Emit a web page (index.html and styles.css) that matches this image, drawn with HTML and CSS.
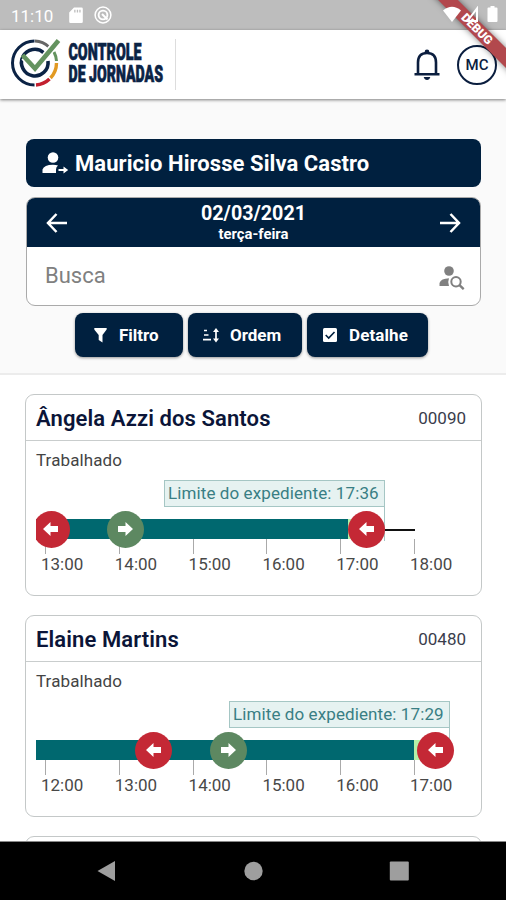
FILE: index.html
```
<!DOCTYPE html>
<html lang="pt-BR">
  <head>
    <meta charset="UTF-8" />
    <meta name="viewport" content="width=device-width, initial-scale=1.0" />
    <title>Controle de Jornadas</title>
    <link rel="stylesheet" href="styles.css">
  </head>
  <body>
    <!-- Status bar -->
    <div class="status-bar">
      <span class="clock">11:10</span>
      <svg class="sd-icon" width="14" height="17" viewBox="0 0 14 17">
        <path fill="#fff" fill-rule="evenodd" d="M5 .5h7.500q1.300 0 1.300 1.300v13q0 1.300-1.300 1.300h-11Q.2 16.100.2 14.800V5.500zM5.200 2.800v2.700h1.300V2.800zM7.800 2.800v2.700h1.300V2.800zM10.300 2.800v2.700h1.300V2.800z" />
      </svg>
      <svg class="sync-icon" width="18" height="18" viewBox="0 0 18 18" fill="none" stroke="#fff">
        <circle cx="9" cy="9" r="7.900" stroke-width="1.500" />
        <circle cx="9" cy="9" r="4.400" stroke-width="1.900" />
        <path d="M8 8l5.500 5.500" stroke-width="2" />
      </svg>
      <svg class="signal-icons" width="56" height="18" viewBox="0 0 56 18" fill="#fff">
        <path d="M1 4.500Q10-3 19 4.500L10 16z" />
        <path fill="none" stroke="#fff" stroke-width="2" d="M35 2.500v12.500H25.500z" />
        <path d="M46.500 1.500h2V0h4v1.500h2q1 0 1 1V15q0 1-1 1h-8q-1 0-1-1V2.500q0-1 1-1z" />
      </svg>
    </div>

    <!-- App bar -->
    <header class="app-bar">
      <svg class="logo" width="155" height="52" viewBox="0 0 155 52">
        <g fill="none">
          <path stroke="#0b2345" stroke-width="3" d="M24.500 4A22 22 0 0 0 24.500 48" />
          <path stroke="#666" stroke-width="3" d="M25 4A22 22 0 0 1 39 10" />
          <path stroke="#64935f" stroke-width="3" d="M44 15A22 22 0 0 1 46.500 24" />
          <path stroke="#e29a22" stroke-width="3.400" d="M46.500 26A22 22 0 0 1 40.500 41" />
          <path stroke="#c3202f" stroke-width="3.600" d="M39.500 42A22 22 0 0 1 26 48" />
          <path stroke="#0b2345" stroke-width="3.600" d="M34 16A13.300 13.300 0 1 0 38 24" />
          <path stroke="#fff" stroke-width="7" d="M14 20L25 31.500 44 8" />
          <path stroke="#64935f" stroke-width="4.600" d="M12.500 18L25 31.500 48.500 3.500" />
        </g>
        <g class="logo-text">
          <text x="58.500" y="23.200" textLength="73" lengthAdjust="spacingAndGlyphs">CONTROLE</text>
          <text x="58.500" y="44.500" textLength="94.500" lengthAdjust="spacingAndGlyphs">DE JORNADAS</text>
        </g>
      </svg>
      <div class="app-bar-divider"></div>
      <svg class="bell" width="26" height="32" viewBox="0 0 26 32">
        <path fill="none" stroke="#0b1e3f" stroke-width="2.600" d="M.5 25.200h25M4 25V13.500Q4 4 13 4t9 9.500V25" />
        <circle cx="13" cy="2.800" r="2.300" fill="#0b1e3f" />
        <path fill="#0b1e3f" d="M9.700 28h6.600q-.8 3-3.300 3t-3.300-3z" />
      </svg>
      <div class="avatar">MC</div>
    </header>
    <div class="debug-ribbon">DEBUG</div>

    <!-- Search panel -->
    <section class="panel">
      <div class="manager">
        <svg width="27" height="22" viewBox="0 0 27 22" fill="#fff">
          <circle cx="11" cy="5.500" r="5.300" />
          <path d="M.5 21v-3.500Q2 13 11 12.800q3 0 5 .8-2 1.500-2 4V21z" />
          <path d="M16.500 17h5v-2.500l4.700 3.500-4.700 3.500v-2.500h-5z" />
        </svg>
        <span>Mauricio Hirosse Silva Castro</span>
      </div>

      <div class="search-box">
        <div class="date-row">
          <svg width="22" height="20" viewBox="0 0 22 20">
            <path d="M21 10H2.500M10.500 1L2 10l8.500 9" />
          </svg>
          <div class="date">
            <strong>02/03/2021</strong>
            <span>terça-feira</span>
          </div>
          <svg width="22" height="20" viewBox="0 0 22 20">
            <path d="M1 10h18.500M11.500 1L20 10l-8.500 9" />
          </svg>
        </div>
        <div class="search-row">
          <span>Busca</span>
          <svg width="26" height="24" viewBox="0 0 26 24">
            <circle cx="10" cy="5" r="4.800" fill="#808080" />
            <path fill="#808080" d="M.5 20v-3Q2 12.500 10 12.200q-1.500 3.500 0 7.800z" />
            <circle cx="17" cy="15.700" r="4.700" fill="none" stroke="#808080" stroke-width="2" />
            <path stroke="#808080" stroke-width="2.400" d="M20 18.700l4.700 4.500" />
          </svg>
        </div>
      </div>

      <div class="actions">
        <button class="action filter">
          <svg width="13" height="15" viewBox="0 0 13 15">
            <path fill="#fff" d="M.3 0h12.400q.3 1.500-.8 2.500L8.500 7v7.500L4.700 12V7L1 2.500Q0 1.500.3 0z" />
          </svg>
          Filtro
        </button>
        <button class="action order">
          <svg width="16" height="15" viewBox="0 0 16 15">
            <path fill="none" stroke="#fff" stroke-width="1.700" d="M1 2.500h3M1 7h4.500M0 11.700h8M13 2v11" />
            <path fill="#fff" d="M13 0l3 4h-6zM13 14.500l-3-4h6z" />
          </svg>
          Ordem
        </button>
        <button class="action detail">
          <svg width="14" height="14" viewBox="0 0 14 14">
            <rect width="14" height="14" rx="1.500" fill="#fff" />
            <path fill="none" stroke="#00203f" stroke-width="1.600" d="M2.700 7l3 3 5.800-6" />
          </svg>
          Detalhe
        </button>
      </div>
    </section>

    <!-- Employees, 73.8px per hour on the timeline -->
    <main class="cards">
      <article class="card">
        <div class="card-head">
          <h2>Ângela Azzi dos Santos</h2>
          <span>00090</span>
        </div>
        <p class="card-label">Trabalhado</p>
        <div class="timeline">
          <div class="axis" style="width: 379px"></div>
          <div class="limit" style="left: 128px">Limite do expediente: 17:36</div>
          <div class="worked" style="width: 312px"></div>
          <div class="extra" style="left: 312px; width: 3px"></div>
          <div class="marker out" style="left: -3.500px">
            <svg width="16" height="14" viewBox="0 0 16 14"><path d="M0 7l7.500-7v4H15v6H7.500v4z" /></svg>
          </div>
          <div class="marker in" style="left: 71px">
            <svg width="16" height="14" viewBox="0 0 16 14"><path d="M15 7L7.500 0v4H0v6h7.500v4z" /></svg>
          </div>
          <div class="marker out" style="left: 312px">
            <svg width="16" height="14" viewBox="0 0 16 14"><path d="M0 7l7.500-7v4H15v6H7.500v4z" /></svg>
          </div>
          <div class="hours">
            <span>13:00</span>
            <span>14:00</span>
            <span>15:00</span>
            <span>16:00</span>
            <span>17:00</span>
            <span>18:00</span>
          </div>
        </div>
      </article>

      <article class="card">
        <div class="card-head">
          <h2>Elaine Martins</h2>
          <span>00480</span>
        </div>
        <p class="card-label">Trabalhado</p>
        <div class="timeline">
          <div class="limit" style="left: 193px">Limite do expediente: 17:29</div>
          <div class="worked" style="width: 378px"></div>
          <div class="extra" style="left: 378px; width: 6px"></div>
          <div class="marker out" style="left: 99px">
            <svg width="16" height="14" viewBox="0 0 16 14"><path d="M0 7l7.500-7v4H15v6H7.500v4z" /></svg>
          </div>
          <div class="marker in" style="left: 174px">
            <svg width="16" height="14" viewBox="0 0 16 14"><path d="M15 7L7.500 0v4H0v6h7.500v4z" /></svg>
          </div>
          <div class="marker out" style="left: 381px">
            <svg width="16" height="14" viewBox="0 0 16 14"><path d="M0 7l7.500-7v4H15v6H7.500v4z" /></svg>
          </div>
          <div class="hours">
            <span>12:00</span>
            <span>13:00</span>
            <span>14:00</span>
            <span>15:00</span>
            <span>16:00</span>
            <span>17:00</span>
          </div>
        </div>
      </article>

      <article class="card"></article>
    </main>

    <!-- Android navigation -->
    <nav class="nav-bar">
      <svg width="20" height="22" viewBox="0 0 20 22"><path d="M18 1v20L.5 11z" /></svg>
      <svg width="20" height="22" viewBox="0 0 20 22"><circle cx="10.500" cy="11" r="9.200" /></svg>
      <svg width="20" height="22" viewBox="0 0 20 22"><rect x=".8" y="1.500" width="19" height="19" rx="1" /></svg>
    </nav>
  </body>
</html>
```

FILE: styles.css
```
* {
  margin: 0;
  padding: 0;
  box-sizing: border-box;
}
body {
  position: relative;
  width: 506px;
  height: 900px;
  overflow: hidden;
  display: flex;
  flex-direction: column;
  font-family: Roboto, sans-serif;
  background-color: #fff;
}
svg {
  display: block;
  flex: none;
}

.status-bar {
  flex: none;
  height: 30px;
  display: flex;
  align-items: center;
  padding: 0 8px 0 11px;
  background-color: #bdbdbd;
  color: #fff;
}
.clock {
  width: 58px;
  font-size: 17px;
  padding-top: 2px;
}
.sync-icon {
  margin-left: 11px;
}
/* system icons stay above the ribbon */
.signal-icons {
  position: relative;
  z-index: 2;
  margin-left: auto;
}

.app-bar {
  flex: none;
  position: relative;
  height: 69px;
  display: flex;
  align-items: center;
  padding: 0 9px 0 10px;
  background-color: #fff;
  box-shadow: 0 1px 3px rgba(0, 0, 0, 0.5);
}
.logo {
  margin-top: -3px;
  overflow: visible;
}
.logo-text {
  font-size: 23.5px;
  font-weight: 900;
  fill: #0b2345;
  stroke: #0b2345;
  stroke-width: 0.7px;
}
.app-bar-divider {
  width: 1px;
  height: 51px;
  margin-left: 10px;
  background-color: #ddd;
}
.bell {
  margin-left: auto;
  margin-right: 17px;
}
.avatar {
  width: 40px;
  height: 40px;
  display: flex;
  justify-content: center;
  align-items: center;
  border: 2px solid #0b1e3f;
  border-radius: 50%;
  font-size: 15px;
  font-weight: 500;
  color: #0b1e3f;
}
.debug-ribbon {
  position: absolute;
  top: 22px;
  right: -41px;
  width: 140px;
  height: 14px;
  line-height: 14px;
  transform: rotate(45deg);
  background-color: #b2484d;
  color: #fff;
  font-size: 12px;
  font-weight: 900;
  text-align: center;
  box-shadow: 0 0 6px rgba(0, 0, 0, 0.5);
}

.panel {
  flex: none;
  height: 276px;
  padding: 40px 25px 0 26px;
  background-color: #fafafa;
  border-bottom: 2px solid #ececec;
}
.manager {
  height: 48px;
  display: flex;
  align-items: center;
  gap: 6px;
  padding-left: 16px;
  border-radius: 8px;
  background-color: #00203f;
  color: #fff;
  font-size: 22px;
  font-weight: 700;
  letter-spacing: 0.07px;
}
.search-box {
  height: 109px;
  margin-top: 10px;
  border: 1px solid #aaa;
  border-radius: 9px;
  overflow: hidden;
  background-color: #fff;
}
.date-row {
  height: 49px;
  display: flex;
  justify-content: space-between;
  align-items: center;
  padding: 0 19px;
  background-color: #00203f;
  color: #fff;
}
.date-row path {
  fill: none;
  stroke: #fff;
  stroke-width: 2.5;
}
.date {
  display: flex;
  flex-direction: column;
  align-items: center;
}
.date strong {
  font-size: 19.7px;
  line-height: 23px;
}
.date span {
  font-size: 14.8px;
  font-weight: 700;
  line-height: 18px;
}
.search-row {
  height: 57px;
  display: flex;
  justify-content: space-between;
  align-items: center;
  padding: 0 15px 0 18px;
  color: #808080;
  font-size: 22px;
}
.search-row svg {
  margin-top: 5px;
}
.actions {
  display: flex;
  gap: 5px;
  margin: 7px 0 0 49px;
}
.action {
  height: 44px;
  display: flex;
  align-items: center;
  border: 0;
  border-radius: 8px;
  background-color: #00203f;
  color: #fff;
  font-family: Roboto, sans-serif;
  font-size: 17px;
  font-weight: 700;
  box-shadow: 0 1px 3px rgba(0, 0, 0, 0.4);
}
.filter {
  width: 108px;
  gap: 12px;
  padding-left: 19px;
}
.order {
  width: 114px;
  gap: 11px;
  padding-left: 15px;
}
.detail {
  width: 121px;
  gap: 12px;
  padding-left: 16px;
  letter-spacing: 0.1px;
}

.cards {
  flex: 1;
  min-height: 0;
  overflow: hidden;
  display: flex;
  flex-direction: column;
  gap: 20px;
  padding: 19px 24px 0 25px;
}
.card {
  flex: none;
  height: 202px;
  margin-bottom: -1px;
  border: 1px solid #c4c8c8;
  border-radius: 9px;
}
.card-head {
  height: 46px;
  display: flex;
  justify-content: space-between;
  align-items: center;
  padding: 1px 15px 0 10px;
  border-bottom: 1px solid #c9cdcd;
}
.card-head h2 {
  font-size: 22px;
  font-weight: 600;
  letter-spacing: 0.1px;
  color: #0b1538;
}
.card-head span {
  font-size: 17px;
  color: #3a3d4c;
}
.card-label {
  padding: 9px 10px 1px;
  font-size: 17px;
  line-height: 20px;
  letter-spacing: 0.1px;
  color: #444;
}
.timeline {
  position: relative;
  height: 110px;
  margin-left: 10px;
  padding-top: 68px;
  overflow: hidden;
}
.axis {
  position: absolute;
  top: 58px;
  height: 2px;
  background-color: #111;
}
.limit {
  position: absolute;
  top: 8.5px;
  width: 221px;
  height: 27px;
  border: 1px solid #a5c6c4;
  background-color: #e6f2f1;
  color: #397e84;
  font-size: 17px;
  letter-spacing: 0.1px;
  line-height: 25px;
  padding-left: 3px;
  white-space: nowrap;
}
/* drop line from the limit down to the bar */
.limit::after {
  content: "";
  position: absolute;
  top: 26px;
  right: -1px;
  height: 34px;
  border-right: 1px solid #a5c6c4;
}
.worked,
.extra {
  position: absolute;
  top: 48px;
  height: 20px;
  background-color: #00686f;
}
.extra {
  background-color: #b4f0a8;
}
.marker {
  position: absolute;
  top: 39.5px;
  width: 37px;
  height: 37px;
  display: flex;
  justify-content: center;
  align-items: center;
  border-radius: 50%;
}
.marker path {
  fill: #fff;
}
.out {
  background-color: #c42835;
}
.in {
  background-color: #5d8861;
}
.hours {
  display: flex;
  margin-left: 5px;
}
.hours span {
  flex: none;
  width: 73.8px;
  font-size: 17px;
  line-height: 20px;
  color: #484848;
}
.hours span::before {
  content: "";
  display: block;
  width: 1px;
  height: 15px;
  margin-left: 4px;
  background-color: #aaa;
}

.nav-bar {
  flex: none;
  height: 59px;
  display: flex;
  justify-content: center;
  align-items: center;
  gap: 126px;
  border-top: 1px solid #888;
  background-color: #000;
  fill: #9e9e9e;
}
```
